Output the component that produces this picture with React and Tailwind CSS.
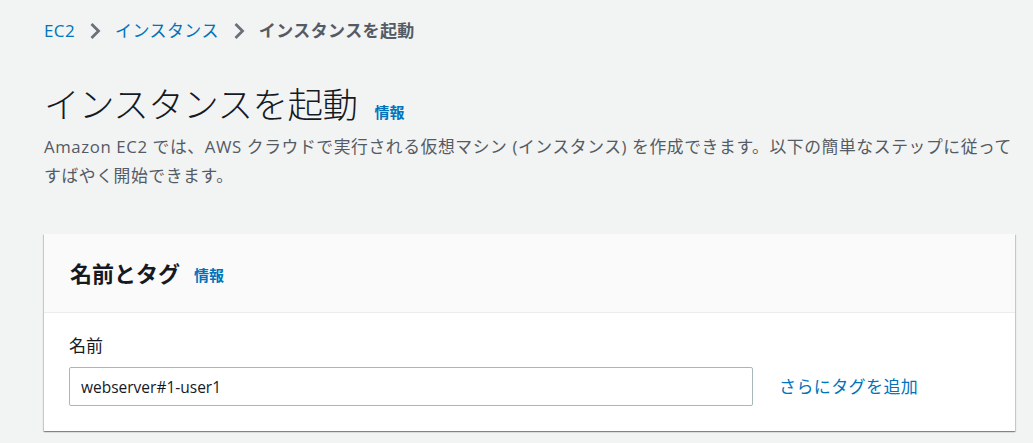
import { useState } from 'react';

function Chevron() {
  return (
    <svg width="12" height="18" viewBox="0 0 12 18" className="mx-[14px]">
      <path d="M2.5 2l7 7-7 7" fill="none" stroke="#687078" strokeWidth="2.8" />
    </svg>
  );
}

export default function App() {
  const [name, setName] = useState('webserver#1-user1');

  return (
    <div className="w-[1033px] h-[443px] overflow-hidden bg-[#f2f3f3] pl-[44px] pr-[18px] font-['Open_Sans','Noto_Sans_CJK_JP',sans-serif]">
      {/* パンくず */}
      <nav className="flex items-center pt-[20px] h-[42px] text-[17px] tracking-[0.4px]">
        <a className="text-[#0073bb]">EC2</a>
        <Chevron />
        <a className="text-[#0073bb]">インスタンス</a>
        <Chevron />
        <span className="text-[#545b64] font-bold">インスタンスを起動</span>
      </nav>

      <div className="flex items-baseline mt-[38px]">
        <h1 className="text-[35.5px] font-light text-[#16191f] leading-[48px] tracking-[-0.5px]">インスタンスを起動</h1>
        <a className="ml-[17px] text-[15px] font-bold text-[#0073bb]">情報</a>
      </div>
      <p className="text-[16.8px] tracking-[0.6px] text-[#545b64] leading-[29px] mt-[4px] whitespace-nowrap">
        Amazon EC2 では、AWS クラウドで実行される仮想マシン (インスタンス) を作成できます。以下の簡単なステップに従って
        <br />
        すばやく開始できます。
      </p>

      <section className="mt-[44px] bg-white shadow-[0_1px_1px_0_rgba(0,28,36,0.3),1px_1px_1px_0_rgba(0,28,36,0.15),-1px_1px_1px_0_rgba(0,28,36,0.15)]">
        <div className="h-[79px] bg-[#fafafa] border-b border-[#eaeded] flex items-center px-[26px]">
          <h2 className="text-[22px] font-bold text-[#16191f]">名前とタグ</h2>
          <a className="ml-[14px] mt-[4px] text-[15px] font-bold text-[#0073bb]">情報</a>
        </div>
        <div className="px-[25px] pt-[20px] pb-[25px]">
          <label className="block text-[17px] text-[#16191f] leading-[26px]">名前</label>
          <div className="flex items-center mt-[8px]">
            <input
              value={name}
              onChange={(e) => setName(e.target.value)}
              className="w-[684px] h-[39px] border border-[#aab7b8] rounded-[2px] px-[11px] text-[15.5px] text-[#16191f] bg-white outline-none"
            />
            <a className="ml-[26px] text-[17px] tracking-[0.4px] text-[#0073bb]">さらにタグを追加</a>
          </div>
        </div>
      </section>
    </div>
  );
}
